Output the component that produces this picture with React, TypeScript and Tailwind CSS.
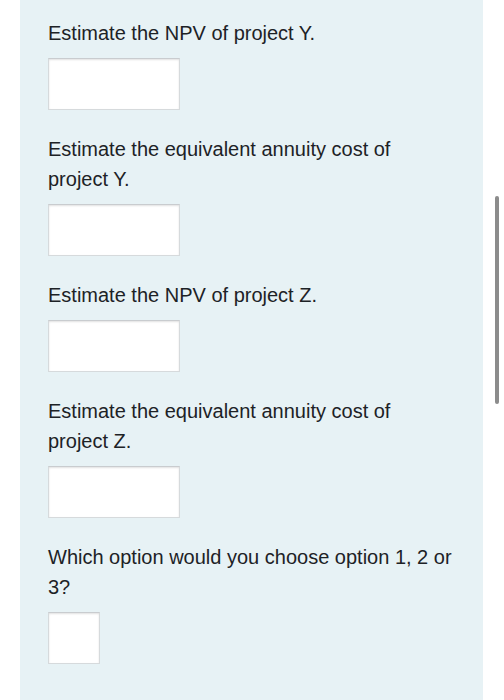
import React from "react";

const preguntas = [
  "Estimate the NPV of project Y.",
  "Estimate the equivalent annuity cost of project Y.",
  "Estimate the NPV of project Z.",
  "Estimate the equivalent annuity cost of project Z.",
  "Which option would you choose option 1, 2 or 3?",
];

const Respuesta = ({ small }: { small?: boolean }) => (
  <input
    type="text"
    className={
      (small ? "w-[52px]" : "w-[132px]") +
      " h-[52px] bg-white border border-[#d6dadc] border-t-[#c9cccf] shadow-[inset_0_1px_2px_rgba(0,0,0,0.12)] outline-none"
    }
  />
);

export default function App() {
  return (
    <div className="relative h-[700px] w-[504px] overflow-hidden bg-white font-['Liberation_Sans',Arial,sans-serif]">
      <div className="ml-[20px] w-[463px] h-full bg-[#e7f2f5] pt-[18px] px-[28px] flex flex-col gap-[24px]">
        {preguntas.map((p, i) => (
          <div key={i} className="flex flex-col gap-[10px]">
            <p className="text-[20px] leading-[30px] text-[#1d2226]">{p}</p>
            <Respuesta small={i === preguntas.length - 1} />
          </div>
        ))}
      </div>
      {/* barra de scroll */}
      <div className="absolute left-[495px] top-[196px] w-[4px] h-[208px] rounded-full bg-[#8c8c8c]" />
    </div>
  );
}
